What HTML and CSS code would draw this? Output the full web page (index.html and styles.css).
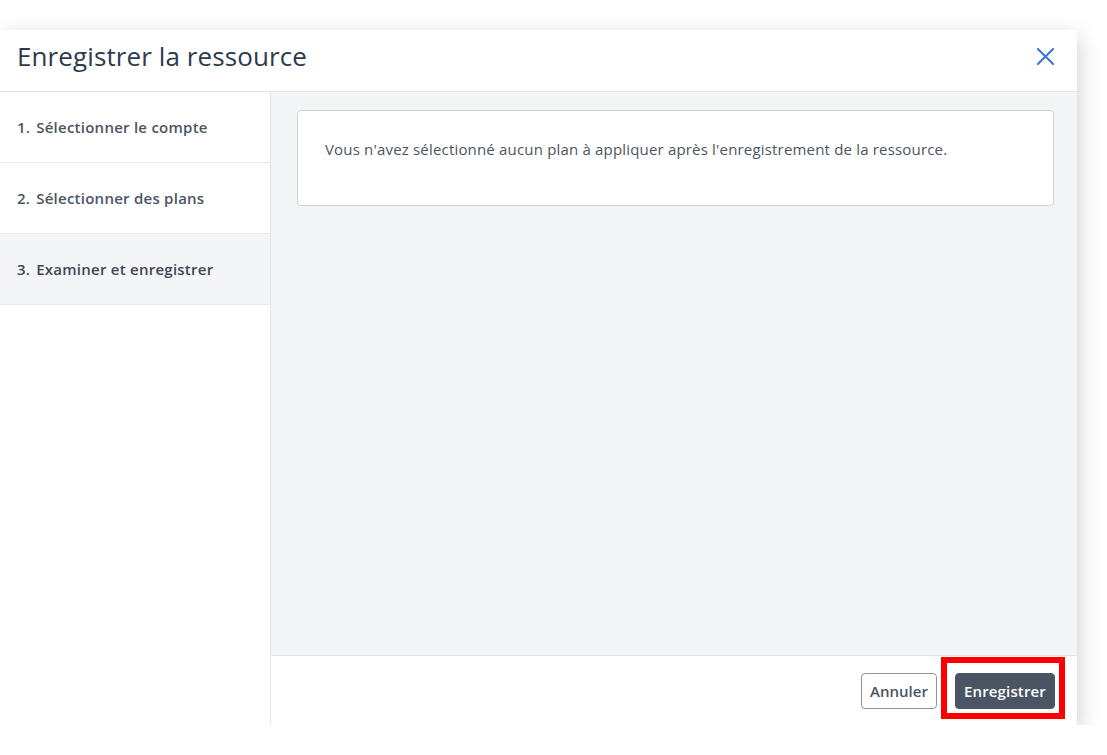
FILE: index.html
```html
<!DOCTYPE html>
<html lang="fr">
<head>
<meta charset="utf-8">
<title>Enregistrer la ressource</title>
<link rel="stylesheet" href="styles.css">
</head>
<body>
<div class="dialog">
  <header class="dialog-header">
    <h1 class="dialog-title">Enregistrer la ressource</h1>
    <button class="close-btn" aria-label="Fermer">
      <svg width="19" height="19" viewBox="0 0 20 20"><path d="M2 2 L18 18 M18 2 L2 18" stroke="#3a78d0" stroke-width="2.2" stroke-linecap="round" fill="none"/></svg>
    </button>
  </header>
  <div class="dialog-body">
    <nav class="steps">
      <div class="step"><span class="num">1.</span>Sélectionner le compte</div>
      <div class="step"><span class="num">2.</span>Sélectionner des plans</div>
      <div class="step active"><span class="num">3.</span>Examiner et enregistrer</div>
    </nav>
    <main class="main">
      <div class="content">
        <div class="card">Vous n'avez sélectionné aucun plan à appliquer après l'enregistrement de la ressource.</div>
      </div>
      <footer class="footer">
        <button class="btn btn-secondary">Annuler</button>
        <div class="highlight-wrap">
          <button class="btn btn-primary">Enregistrer</button>
          <div class="highlight"></div>
        </div>
      </footer>
    </main>
  </div>
</div>
</body>
</html>
```
FILE: styles.css
```css
html, body {
  margin: 0;
  padding: 0;
  background: #ffffff;
  font-family: "Open Sans", "Noto Sans", sans-serif;
}
.dialog {
  margin-top: 30px;
  width: 1077px;
  height: 695px;
  background: #fff;
  box-shadow: 0 8px 22px rgba(0, 0, 0, 0.22);
  display: flex;
  flex-direction: column;
}
.dialog-header {
  height: 61px;
  box-sizing: border-box;
  border-bottom: 1px solid #e1e3e6;
  display: flex;
  align-items: center;
  justify-content: space-between;
  padding: 0 22px 9px 17px;
  flex-shrink: 0;
  height: 62px;
}
.dialog-title {
  margin: 0;
  font-size: 26px;
  font-weight: 400;
  color: #2e3b4d;
  letter-spacing: 0.1px;
}
.close-btn {
  border: none;
  background: none;
  padding: 0;
  width: 19px;
  height: 19px;
  cursor: pointer;
  display: flex;
}
.dialog-body {
  flex: 1;
  display: flex;
  min-height: 0;
}
.steps {
  width: 270px;
  border-right: 1px solid #e3e5e8;
  flex-shrink: 0;
}
.step {
  height: 70px;
  border-bottom: 1px solid #e8eaed;
  display: flex;
  align-items: center;
  padding-left: 17px;
  font-size: 15px;
  font-weight: 600;
  letter-spacing: 0.25px;
  color: #4b5563;
}
.step .num {
  margin-right: 6px;
}
.step.active {
  background: #f4f5f7;
  color: #3f4754;
}
.main {
  flex: 1;
  display: flex;
  flex-direction: column;
  min-width: 0;
}
.content {
  flex: 1;
  background: #f3f4f6;
  padding: 18px 23px 0 26px;
}
.card {
  background: #fff;
  border: 1px solid #cfd3d8;
  border-radius: 4px;
  box-sizing: content-box;
  height: 67px;
  padding: 27px 26px 0 27px;
  font-size: 15px;
  line-height: 22px;
  letter-spacing: 0.18px;
  color: #4b5563;
}
.footer {
  height: 69px;
  border-top: 1px solid #e3e5e8;
  display: flex;
  align-items: center;
  justify-content: flex-end;
  gap: 18px;
  padding-right: 22px;
  flex-shrink: 0;
}
.btn {
  height: 36px;
  border-radius: 4px;
  font-family: "Open Sans", "Noto Sans", sans-serif;
  font-size: 15px;
  font-weight: 600;
  padding: 0 8px;
  cursor: pointer;
}
.btn-secondary {
  background: #fff;
  border: 1px solid #8c949f;
  color: #4b5563;
  width: 76px;
}
.btn-primary {
  background: #4a5462;
  border: 1px solid #4a5462;
  color: #fff;
  width: 100px;
  letter-spacing: 0.15px;
}
.highlight-wrap {
  position: relative;
  display: flex;
}
.highlight {
  position: absolute;
  left: -14px;
  top: -16px;
  right: -10px;
  bottom: -10px;
  border: 6px solid #ff0000;
  pointer-events: none;
}
```
